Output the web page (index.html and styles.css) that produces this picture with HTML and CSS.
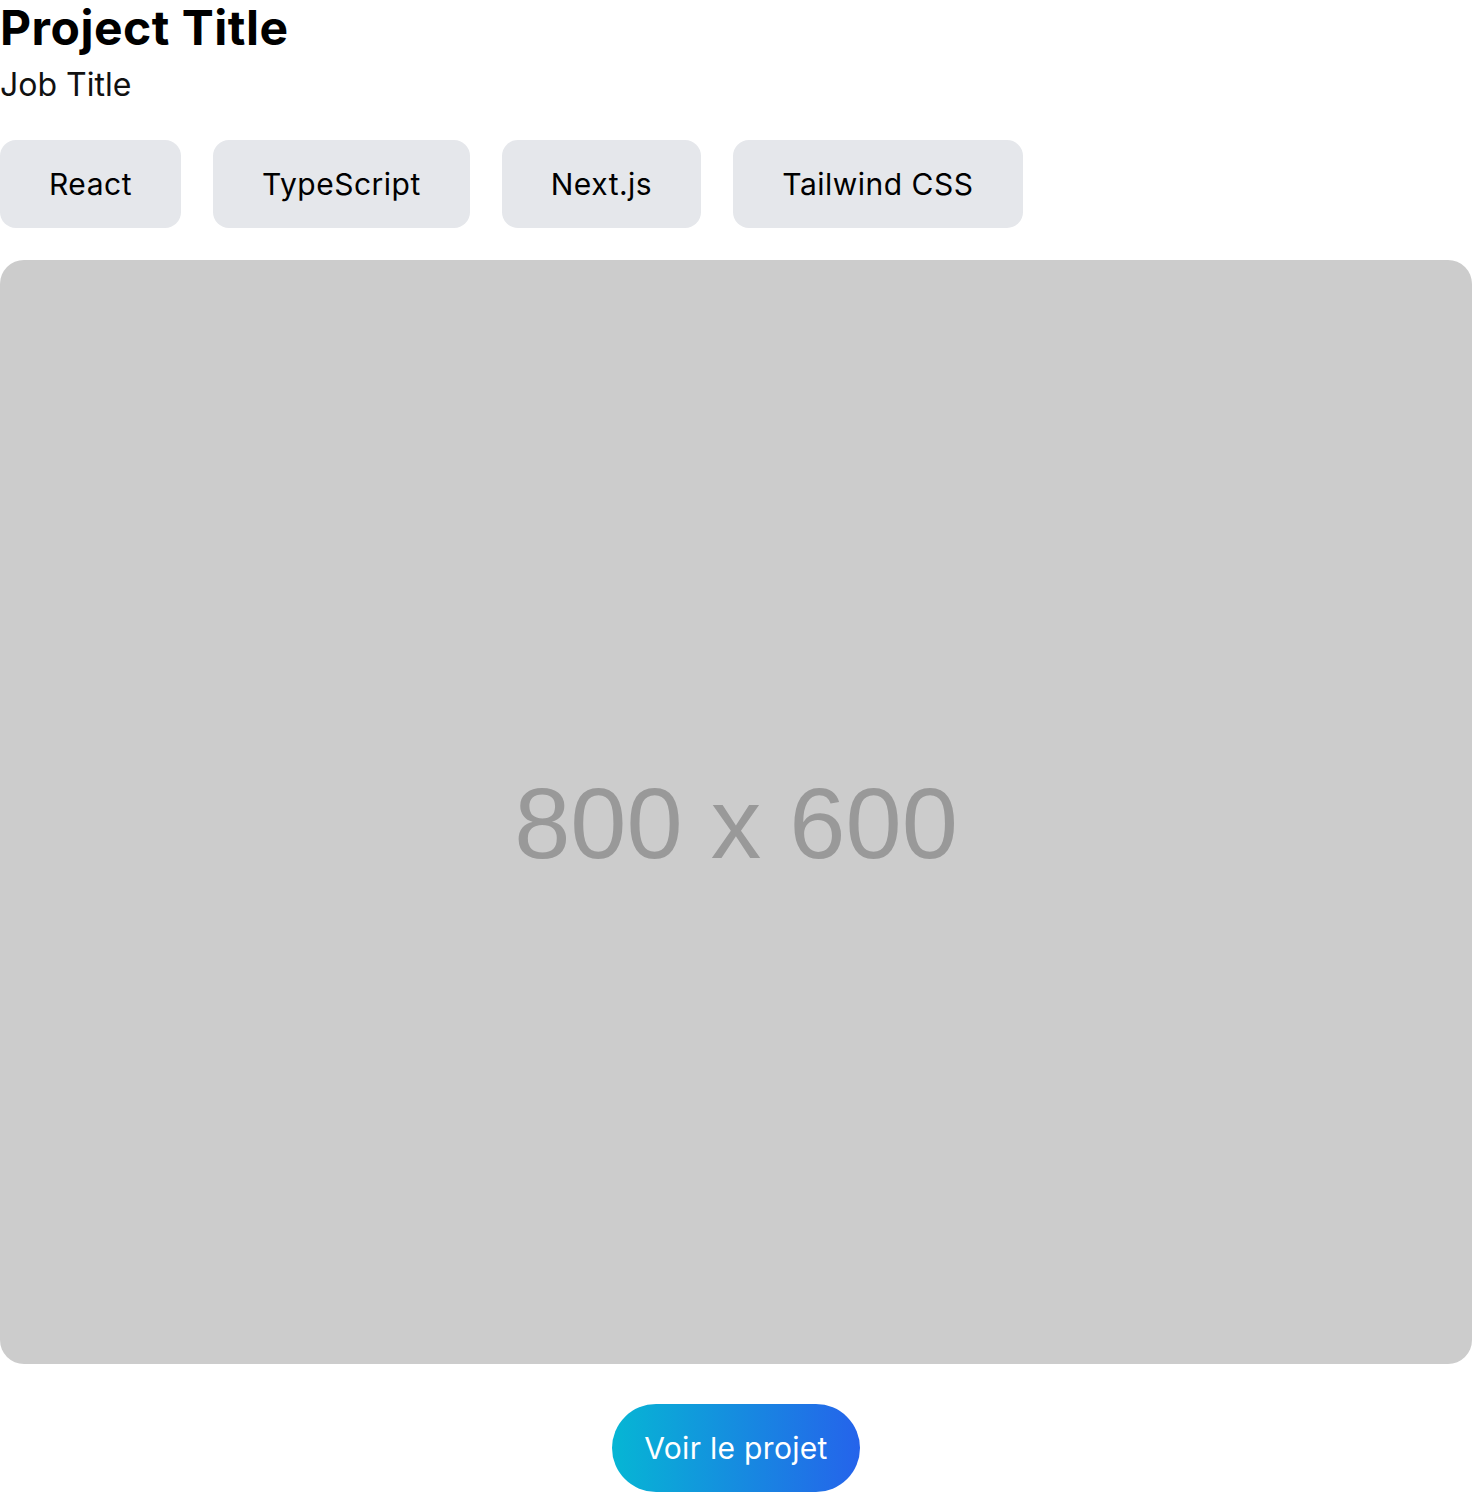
FILE: index.html
```html
<!DOCTYPE html>
<html lang="fr">
<head>
    <meta charset="UTF-8">
    <meta name="viewport" content="width=device-width, initial-scale=1.0">
    <title>Project Title</title>
    <link rel="stylesheet" href="styles.css">
</head>
<body>
    <main class="project">
        <header class="project-header">
            <h1 class="project-title">Project Title</h1>
            <p class="job-title">Job Title</p>
        </header>

        <div class="tag-list">
            <span class="tag">React</span>
            <span class="tag">TypeScript</span>
            <span class="tag">Next.js</span>
            <span class="tag">Tailwind CSS</span>
        </div>

        <!-- Image du projet (placeholder) -->
        <div class="project-image">
            <span class="placeholder-text">800 x 600</span>
        </div>

        <div class="actions">
            <a class="view-btn" href="#">Voir le projet</a>
        </div>
    </main>
</body>
</html>
```

FILE: styles.css
```css
* {
    margin: 0;
    padding: 0;
    box-sizing: border-box;
}

body {
    font-family: 'Inter', 'Noto Sans', sans-serif;
    color: #000000;
    background: #ffffff;
}

.project {
    width: 1472px;
}

.project-title {
    font-size: 48px;
    font-weight: 700;
    line-height: 56px;
    letter-spacing: 0.5px;
}

.job-title {
    font-size: 32px;
    line-height: 40px;
    margin-top: 9px;
    color: #111111;
}

.tag-list {
    display: flex;
    gap: 32px;
    margin-top: 35px;
}

.tag {
    display: inline-flex;
    align-items: center;
    height: 88px;
    padding: 0 49px;
    font-size: 30px;
    letter-spacing: 0.5px;
    background: #e5e7eb;
    border-radius: 16px;
}

.project-image {
    display: flex;
    align-items: center;
    justify-content: center;
    height: 1104px;
    margin-top: 32px;
    padding-top: 22px;
    background: #cccccc;
    border-radius: 24px;
    overflow: hidden;
}

.placeholder-text {
    font-family: 'Liberation Sans', Arial, sans-serif;
    font-size: 101px;
    color: #999999;
    filter: blur(0.6px);
}

.actions {
    display: flex;
    justify-content: center;
    margin-top: 40px;
}

.view-btn {
    display: inline-flex;
    align-items: center;
    height: 88px;
    padding: 0 32px;
    font-size: 30px;
    letter-spacing: 0.3px;
    color: #ffffff;
    text-decoration: none;
    border-radius: 9999px;
    background: linear-gradient(to right, #06b6d4, #2563eb);
}
```
